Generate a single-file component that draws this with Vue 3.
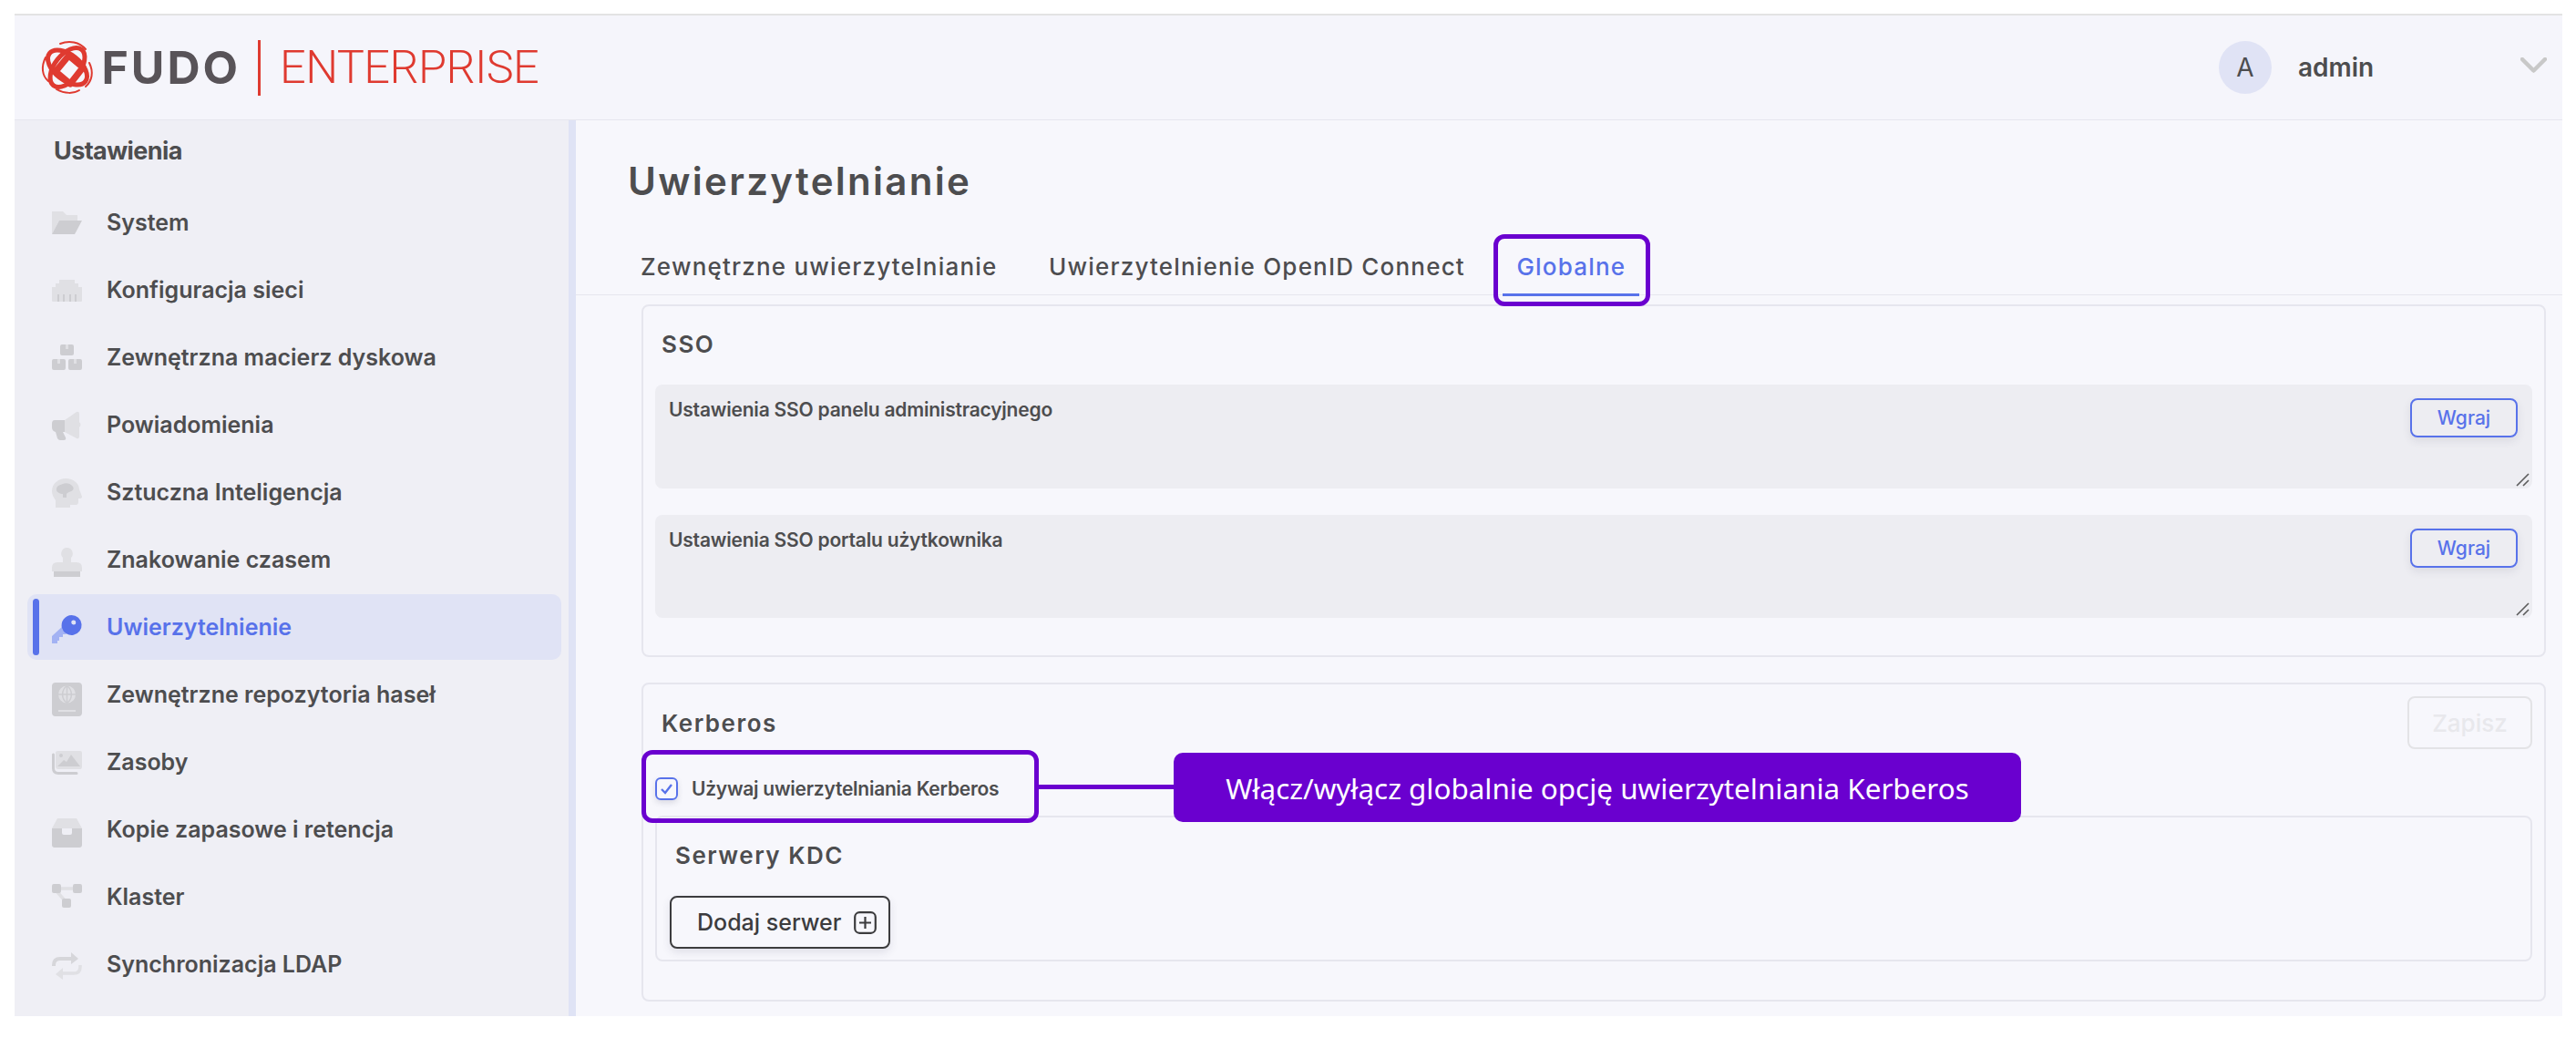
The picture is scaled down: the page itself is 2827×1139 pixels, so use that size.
<template>
  <div class="page">
    <div class="frame">
      <header class="topbar">
        <div class="logo">
          <svg class="logo-mark" viewBox="0 0 58 58" width="58" height="58">
            <ellipse class="mark-lobe" cx="29" cy="29" rx="25" ry="14" transform="rotate(38 29 29)" />
            <ellipse class="mark-lobe" cx="29" cy="29" rx="25" ry="14" transform="rotate(-52 29 29)" />
            <path class="mark-ring" d="M30.5 16 L46 29 L32 47 L16 33.5 Z" />
            <path class="mark-thin" d="M5 18 C0 28 1 38 8 44 M21 3 C31 -1 42 1 49 9 M53 24 C58 34 56 44 49 50 M17 53 C26 58 36 58 42 54" />
          </svg>
          <span class="logo-fudo">FUDO</span>
          <span class="logo-line"></span>
          <span class="logo-ent">ENTERPRISE</span>
        </div>
        <div class="user">
          <span class="avatar">A</span>
          <span class="user-name">admin</span>
          <svg class="chevron" viewBox="0 0 29 17" width="29" height="17">
            <path d="M2 2 L14.5 14.5 L27 2" />
          </svg>
        </div>
      </header>

      <div class="body">
        <aside class="sidebar">
          <h2 class="side-title">Ustawienia</h2>
          <ul class="menu">
            <li
              v-for="item in menu"
              :key="item.label"
              class="menu-item"
              :class="{ active: item.active }"
            >
              <svg class="menu-icon" viewBox="0 0 33 33" width="33" height="33">
                <path
                  v-for="(p, i) in item.icon"
                  :key="i"
                  :d="p.d"
                  :class="p.c"
                />
              </svg>
              <span>{{ item.label }}</span>
            </li>
          </ul>
        </aside>

        <main class="content">
          <h1 class="page-title">Uwierzytelnianie</h1>
          <nav class="tabs">
            <div class="tab">Zewnętrzne uwierzytelnianie</div>
            <div class="tab">Uwierzytelnienie OpenID Connect</div>
            <div class="tab tab-active">
              Globalne
              <span class="mark-box tab-box"></span>
            </div>
          </nav>

          <section class="card sso">
            <h3 class="card-title">SSO</h3>
            <div class="upload" v-for="row in uploads" :key="row">
              <span class="upload-label">{{ row }}</span>
              <button class="btn-upload">Wgraj</button>
              <svg class="grip" viewBox="0 0 15 15" width="15" height="15">
                <path d="M1 14 L14 1 M8 14 L14 8" />
              </svg>
            </div>
          </section>

          <section class="card kerberos">
            <div class="kerberos-head">
              <h3 class="card-title">Kerberos</h3>
              <button class="btn-save">Zapisz</button>
            </div>
            <div class="check-row">
              <span class="checkbox">
                <svg viewBox="0 0 25 25" width="25" height="25">
                  <path d="M7 13 L11 17 L18 8" />
                </svg>
              </span>
              <span class="check-label">Używaj uwierzytelniania Kerberos</span>
              <span class="mark-box check-box"></span>
              <span class="connector"></span>
              <div class="callout">Włącz/wyłącz globalnie opcję uwierzytelniania Kerberos</div>
            </div>
            <div class="kdc">
              <h3 class="card-title kdc-title">Serwery KDC</h3>
              <button class="btn-add">
                Dodaj serwer
                <svg viewBox="0 0 25 25" width="25" height="25">
                  <rect x="1.2" y="1.2" width="22.6" height="22.6" rx="5" />
                  <path d="M12.5 6 V19 M6 12.5 H19" />
                </svg>
              </button>
            </div>
          </section>
        </main>
      </div>
    </div>
  </div>
</template>

<script setup>
const uploads = [
  'Ustawienia SSO panelu administracyjnego',
  'Ustawienia SSO portalu użytkownika'
]

const menu = [
  {
    label: 'System',
    icon: [
      { c: 'light', d: 'M0 4 H12 L16 8 H28 V14 H8 L0 29 Z' },
      { c: 'dark', d: 'M8 14 H33 L25 29 H0 Z' }
    ]
  },
  {
    label: 'Konfiguracja sieci',
    icon: [
      { c: 'light', d: 'M8 5 H25 V9 H29 V13 H33 V28 Q33 29 32 29 H1 Q0 29 0 28 V13 H4 V9 H8 Z' },
      { c: 'dark', d: 'M6 21 H8 V29 H6 Z M12 21 H14 V29 H12 Z M19 21 H21 V29 H19 Z M25 21 H27 V29 H25 Z' }
    ]
  },
  {
    label: 'Zewnętrzna macierz dyskowa',
    icon: [
      { c: 'dark', d: 'M11 2 H22 Q24 2 24 4 V12 Q24 14 22 14 H11 Q9 14 9 12 V4 Q9 2 11 2 Z M2 18 H13 Q15 18 15 20 V28 Q15 30 13 30 H2 Q0 30 0 28 V20 Q0 18 2 18 Z M20 18 H31 Q33 18 33 20 V28 Q33 30 31 30 H20 Q18 30 18 28 V20 Q18 18 20 18 Z' },
      { c: 'light', d: 'M15 2 H18 V7 H15 Z M6 18 H9 V23 H6 Z M24 18 H27 V23 H24 Z' }
    ]
  },
  {
    label: 'Powiadomienia',
    icon: [
      { c: 'light', d: 'M14 11 L27 2 Q30 1 30 4 V13 Q33 16 30 19 V29 Q30 32 27 31 L14 24 Z' },
      { c: 'dark', d: 'M3 11 H14 V24 H12 L15 30 Q16 33 13 33 H9 Q7 33 6 31 L4 24 Q0 23 0 19 V15 Q0 11 3 11 Z' }
    ]
  },
  {
    label: 'Sztuczna Inteligencja',
    icon: [
      { c: 'light', d: 'M0 15 C0 6 8 1 15 1 C24 1 30 7 30 13 L33 21 Q33 23 30 23 H29 V27 Q29 30 26 30 H20 V33 H4 V25 C2 22 0 19 0 15 Z' },
      { c: 'dark', d: 'M5 12 C6 8 10 8 12 7 C16 5 21 7 23 10 C25 13 22 15 19 16 C17 17 16 17 16 19 V22 H12 V18 C9 18 4 16 5 12 Z' }
    ]
  },
  {
    label: 'Znakowanie czasem',
    icon: [
      { c: 'light', d: 'M16.5 3 A6.5 6.5 0 0 1 21 14 V19 H27 Q33 19 33 25 V29 H0 V25 Q0 19 6 19 H12 V14 A6.5 6.5 0 0 1 16.5 3 Z' },
      { c: 'dark', d: 'M2 29 H31 V35 H2 Z' }
    ]
  },
  {
    label: 'Uwierzytelnienie',
    active: true,
    icon: [
      { c: 'key-light', d: 'M12 15 L18 21 L15 24 H12 V27 H8 V31 H6 V34 H0 V26 Z' },
      { c: 'key', d: 'M21.5 3 A11 11 0 1 1 11 17 A11 11 0 0 1 21.5 3 Z M23.7 8.5 A2.5 2.5 0 1 0 23.8 13.5 A2.5 2.5 0 0 0 23.7 8.5 Z' }
    ]
  },
  {
    label: 'Zewnętrzne repozytoria haseł',
    icon: [
      { c: 'dark', d: 'M4 3 H29 Q33 3 33 7 V36 Q33 40 29 40 H4 Q0 40 0 36 V7 Q0 3 4 3 Z' },
      { c: 'light', d: 'M16.5 6.5 A9.5 9.5 0 1 1 16.5 25.5 A9.5 9.5 0 1 1 16.5 6.5 Z M7 33 H26 V35 H7 Z' },
      { c: 'dark-line', d: 'M7 16 H26 M16.5 6.5 V25.5 M16.5 6.5 C10 11 10 21 16.5 25.5 M16.5 6.5 C23 11 23 21 16.5 25.5' }
    ]
  },
  {
    label: 'Zasoby',
    icon: [
      { c: 'light', d: 'M7 4 H31 Q33 4 33 6 V21 Q33 24 31 24 H7 Q4 24 4 21 V6 Q4 4 7 4 Z' },
      { c: 'dark', d: 'M6 21 L13 14 L16 16 L21 8 L31 21 Z M10 7 A2 2 0 1 1 10 11 A2 2 0 1 1 10 7 Z' },
      { c: 'dark-line wide', d: 'M1.5 8 V23 Q1.5 28.5 7 28.5 H27' }
    ]
  },
  {
    label: 'Kopie zapasowe i retencja',
    icon: [
      { c: 'light', d: 'M6 4 H12 V15 H0 Z M21 4 H27 L33 15 H21 Z M12 4 H21 V15 H12 Z' },
      { c: 'dark', d: 'M0 15 H11 V20 Q11 22 13 22 H20 Q22 22 22 20 V15 H33 V33 Q33 36 30 36 H3 Q0 36 0 33 Z' }
    ]
  },
  {
    label: 'Klaster',
    icon: [
      { c: 'light-line', d: 'M8 7 H25 M6 11 L14 20' },
      { c: 'dark', d: 'M2 2 H8 Q10 2 10 4 V10 Q10 12 8 12 H2 Q0 12 0 10 V4 Q0 2 2 2 Z M25 2 H31 Q33 2 33 4 V10 Q33 12 31 12 H25 Q23 12 23 10 V4 Q23 2 25 2 Z M13 18 H19 Q21 18 21 20 V26 Q21 28 19 28 H13 Q11 28 11 26 V20 Q11 18 13 18 Z' }
    ]
  },
  {
    label: 'Synchronizacja LDAP',
    icon: [
      { c: 'mid-line', d: 'M2 18 V17 Q2 10 9 10 H23' },
      { c: 'mid', d: 'M21 3 L29 10 L21 16 Z' },
      { c: 'light-line', d: 'M31 17 V19 Q31 26 24 26 H10' },
      { c: 'light', d: 'M12 20 L4 27 L12 33 Z' }
    ]
  }
]
</script>

<style>
html,
body {
  margin: 0;
  background: #ffffff;
}
</style>

<style scoped>
.page {
  width: 2827px;
  height: 1139px;
  box-sizing: border-box;
  padding: 15px 15px 24px 16px;
  font-family: Inter, "Liberation Sans", sans-serif;
  color: #4d4d4f;
  overflow: hidden;
}

.frame {
  height: 100%;
  display: flex;
  flex-direction: column;
  border-top: 2px solid #e3e3e3;
  box-sizing: border-box;
  background: #f7f7fc;
}

.topbar {
  height: 114px;
  flex: none;
  display: flex;
  align-items: center;
  justify-content: space-between;
  background: #f5f5fb;
  border-bottom: 1px solid #e6e6ee;
}

.logo {
  display: flex;
  align-items: center;
  margin-left: 28.5px;
}

.logo-mark {
  flex: none;
  overflow: visible;
}

.mark-lobe {
  fill: none;
  stroke: #df3a30;
  stroke-width: 5;
}

.mark-ring {
  fill: #f6f6fb;
  stroke: #df3a30;
  stroke-width: 7;
  stroke-linejoin: round;
}

.mark-thin {
  fill: none;
  stroke: #df3a30;
  stroke-width: 2;
  stroke-linecap: round;
}

.logo-fudo {
  margin-left: 9px;
  font-size: 50px;
  line-height: 1;
  font-weight: 700;
  color: #585358;
  letter-spacing: 3px;
}

.logo-line {
  width: 3px;
  height: 61px;
  margin: 0 21px 0 19px;
  background: #df3a30;
}

.logo-ent {
  font-family: Roboto, sans-serif;
  font-size: 50.5px;
  line-height: 1;
  font-weight: 300;
  color: #df3a30;
  letter-spacing: -0.6px;
}

.user {
  display: flex;
  align-items: center;
  margin-right: 17px;
}

.avatar {
  width: 58px;
  height: 58px;
  border-radius: 50%;
  background: #e0e3f5;
  display: flex;
  align-items: center;
  justify-content: center;
  font-size: 28px;
  font-weight: 400;
}

.user-name {
  width: 244px;
  margin-left: 29px;
  font-size: 28px;
  font-weight: 600;
}

.chevron {
  margin-top: -6px;
}

.chevron path {
  fill: none;
  stroke: #c8c8c8;
  stroke-width: 4.5;
  stroke-linecap: round;
  stroke-linejoin: round;
}

.body {
  flex: 1;
  min-height: 0;
  display: flex;
}

.sidebar {
  width: 608px;
  flex: none;
  box-sizing: content-box;
  background: #efeff5;
  border-right: 8px solid #dfe3f5;
}

.side-title {
  margin: 0;
  padding: 18px 0 0 43px;
  height: 50px;
  font-size: 27px;
  line-height: 32px;
  font-weight: 700;
  letter-spacing: -0.6px;
}

.menu {
  list-style: none;
  margin: 8px 0 0;
  padding: 0 8px 0 14px;
  display: flex;
  flex-direction: column;
  gap: 2px;
}

.menu-item {
  position: relative;
  height: 72px;
  display: flex;
  align-items: center;
  padding-left: 27px;
  border-radius: 10px;
  font-size: 25px;
  font-weight: 600;
}

.menu-item span {
  margin-left: 27px;
}

.menu-item.active {
  background: #e0e3f5;
  color: #5872ea;
}

.menu-item.active::before {
  content: '';
  position: absolute;
  left: 6px;
  top: 5px;
  bottom: 5px;
  width: 7px;
  border-radius: 4px;
  background: #5872ea;
}

.menu-icon {
  flex: none;
  overflow: visible;
}

.light {
  fill: #e0e0e4;
}

.dark {
  fill: #cdcdd1;
}

.mid {
  fill: #d6d6da;
}

.key {
  fill: #5872ea;
  fill-rule: evenodd;
}

.key-light {
  fill: #a3b2f3;
}

.dark-line,
.light-line,
.mid-line {
  fill: none;
  stroke-width: 1.5;
}

.dark-line {
  stroke: #cdcdd1;
}

.dark-line.wide {
  stroke-width: 3;
  stroke-linecap: round;
}

.light-line {
  stroke: #e0e0e4;
  stroke-width: 3.5;
}

.mid-line {
  stroke: #d6d6da;
  stroke-width: 4;
}

.content {
  flex: 1;
  min-width: 0;
  background: #f7f7fc;
}

.page-title {
  margin: 43px 0 0 57px;
  height: 48px;
  font-size: 42px;
  line-height: 48px;
  font-weight: 600;
  letter-spacing: 2.3px;
}

.tabs {
  margin-top: 40px;
  height: 60px;
  padding-left: 56px;
  display: flex;
  gap: 26.5px;
  border-bottom: 1px solid #e6e6ee;
}

.tab {
  position: relative;
  height: 62px;
  box-sizing: border-box;
  padding: 0 15px 3px;
  display: flex;
  align-items: center;
  font-size: 26px;
  font-weight: 500;
  letter-spacing: 1.2px;
  white-space: nowrap;
}

.tab-active {
  color: #5872ea;
  border-bottom: 3px solid #5872ea;
  padding-bottom: 0;
}

.mark-box {
  position: absolute;
  box-sizing: border-box;
  border: 5px solid #6a00cf;
  border-radius: 12px;
}

.tab-box {
  top: -6px;
  right: -12px;
  bottom: -14px;
  left: -10px;
}

.card {
  margin: 10px 18px 0 72px;
  padding: 0 13px;
  border: 2px solid #e6e6ee;
  border-radius: 8px;
}

.card-title {
  margin: 0;
  font-size: 26px;
  line-height: 30px;
  font-weight: 600;
  letter-spacing: 1.5px;
}

.sso {
  height: 387px;
  box-sizing: border-box;
}

.sso .card-title {
  margin: 27px 0 0 7px;
  height: 59px;
}

.upload {
  position: relative;
  height: 113.5px;
  margin-bottom: 29px;
  padding: 15px 16px 0 15px;
  box-sizing: border-box;
  display: flex;
  justify-content: space-between;
  align-items: flex-start;
  background: #ededf2;
  border-radius: 8px;
}

.upload-label {
  margin-top: -2px;
  font-size: 21px;
  line-height: 30px;
  font-weight: 600;
  letter-spacing: -0.2px;
}

.btn-upload {
  width: 118px;
  height: 43px;
  background: transparent;
  border: 2px solid #5872ea;
  border-radius: 8px;
  box-shadow: 0 4px 10px rgba(60, 60, 90, 0.1);
  color: #5872ea;
  font: 500 21px Inter, sans-serif;
}

.grip {
  position: absolute;
  right: 3px;
  bottom: 2px;
}

.grip path {
  fill: none;
  stroke: #5c5c5c;
  stroke-width: 1.6;
}

.kerberos {
  margin-top: 28px;
  height: 350px;
  box-sizing: border-box;
}

.kerberos-head {
  display: flex;
  align-items: center;
  justify-content: space-between;
  padding: 13px 0 0 7px;
}

.kerberos-head .card-title {
  margin-top: 2px;
}

.btn-save {
  width: 137px;
  height: 58px;
  background: transparent;
  border: 2px solid #e3e3e6;
  border-radius: 8px;
  color: #e8e8ec;
  font: 500 26px Inter, sans-serif;
}

.check-row {
  position: relative;
  height: 60px;
  margin-top: 13px;
  display: flex;
  align-items: center;
}

.checkbox {
  width: 25px;
  height: 25px;
  box-sizing: border-box;
  border: 2px solid #5872ea;
  border-radius: 6px;
  box-shadow: 0 3px 6px rgba(60, 60, 90, 0.15);
  display: flex;
  align-items: center;
  justify-content: center;
}

.checkbox svg {
  flex: none;
}

.checkbox path {
  fill: none;
  stroke: #5872ea;
  stroke-width: 2.4;
}

.check-label {
  margin-left: 15px;
  font-size: 21px;
  font-weight: 600;
  letter-spacing: -0.25px;
}

.check-box {
  top: -12px;
  left: -15px;
  width: 436px;
  height: 80px;
}

.connector {
  position: absolute;
  left: 421px;
  top: 26px;
  width: 149px;
  height: 5px;
  background: #6a00cf;
}

.callout {
  position: absolute;
  left: 569px;
  top: -9px;
  width: 930px;
  height: 76px;
  border-radius: 10px;
  background: #6a00cf;
  color: #ffffff;
  font-family: "Noto Sans", sans-serif;
  font-size: 31.4px;
  display: flex;
  align-items: center;
  justify-content: center;
}

.kdc {
  height: 160px;
  box-sizing: border-box;
  border: 2px solid #e6e6ee;
  border-radius: 8px;
  padding: 0 14px;
}

.kdc-title {
  margin: 27px 0 0 6px;
  height: 59px;
}

.btn-add {
  width: 242px;
  height: 58px;
  display: flex;
  align-items: center;
  gap: 14px;
  padding: 0 0 0 28px;
  background: #f7f7fc;
  border: 2px solid #3c3c3e;
  border-radius: 8px;
  box-shadow: 0 4px 10px rgba(60, 60, 90, 0.12);
  color: #3c3c3e;
  font: 500 25px Inter, sans-serif;
  white-space: nowrap;
}

.btn-add svg {
  flex: none;
}

.btn-add rect,
.btn-add path {
  fill: none;
  stroke: #3c3c3e;
  stroke-width: 2.2;
}
</style>
